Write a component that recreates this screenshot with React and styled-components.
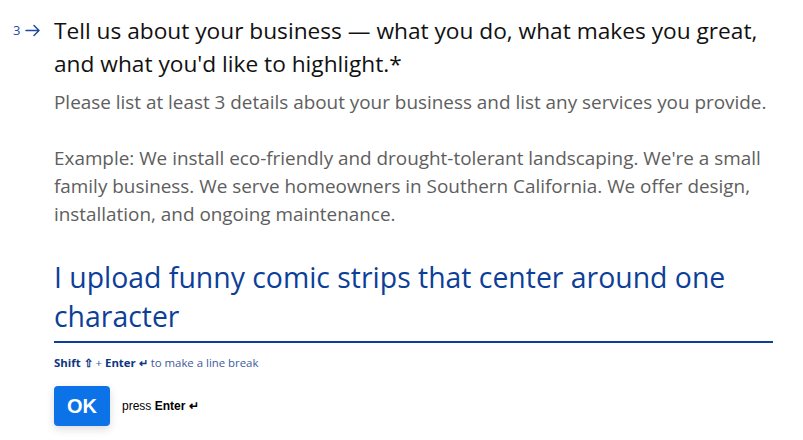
import React from "react";
import styled, { createGlobalStyle } from "styled-components";

const GlobalStyle = createGlobalStyle`
  html, body {
    margin: 0;
    padding: 0;
    background: #ffffff;
  }
  body {
    font-family: "Open Sans", "Noto Sans", sans-serif;
  }
`;

const Page = styled.div`
  width: 803px;
  height: 440px;
  box-sizing: border-box;
  padding: 14px 30px 0 54px;
  overflow: hidden;
`;

const Question = styled.div`
  position: relative;
`;

const Counter = styled.div`
  position: absolute;
  left: -41px;
  top: 8px;
  display: flex;
  align-items: center;
  gap: 5px;
  color: #1d4aa0;
  font-size: 13px;
  line-height: 16px;
`;

const Title = styled.h1`
  margin: 0;
  font-size: 22.7px;
  line-height: 33px;
  font-weight: 400;
  color: #111111;
  white-space: nowrap;
`;

const Description = styled.div`
  margin-top: 8px;
  font-size: 18.9px;
  line-height: 28px;
  color: #5e5e5e;
  white-space: nowrap;
  p {
    margin: 0;
  }
  p + p {
    margin-top: 28px;
  }
`;

const Answer = styled.div`
  margin-top: 30px;
  width: 719px;
  padding-bottom: 5px;
  border-bottom: 2px solid #0d3f98;
  font-size: 28.4px;
  line-height: 39px;
  color: #0d3f98;
  white-space: nowrap;
`;

const Hint = styled.div`
  margin-top: 13px;
  font-size: 11.4px;
  line-height: 14px;
  color: #3d5a9e;
  b {
    font-weight: 700;
    color: #0d3580;
  }
`;

const Actions = styled.div`
  margin-top: 16px;
  display: flex;
  align-items: center;
  gap: 12px;
`;

const OkButton = styled.button`
  width: 56px;
  height: 40px;
  border: none;
  border-radius: 4px;
  background: #0b72e7;
  color: #ffffff;
  font-family: "Liberation Sans", Arial, sans-serif;
  font-size: 20px;
  font-weight: 700;
  box-shadow: 0 3px 8px rgba(0, 0, 0, 0.15);
  cursor: pointer;
`;

const PressEnter = styled.span`
  font-family: "Liberation Sans", Arial, sans-serif;
  font-size: 12px;
  color: #000000;
  b {
    font-weight: 700;
  }
`;

function ArrowRight() {
  return (
    <svg width="16" height="13" viewBox="0 0 16 13" fill="none">
      <path
        d="M1 6.5h13M9 1.5l5 5-5 5"
        stroke="currentColor"
        strokeWidth="1.5"
        strokeLinecap="round"
        strokeLinejoin="round"
      />
    </svg>
  );
}

export default function App() {
  return (
    <>
      <GlobalStyle />
      <Page>
        <Question>
          <Counter>
            <span>3</span>
            <ArrowRight />
          </Counter>
          <Title>
            Tell us about your business — what you do, what makes you great,
            <br />
            and what you'd like to highlight.*
          </Title>
          <Description>
            <p>
              Please list at least 3 details about your business and list any
              services you provide.
            </p>
            <p>
              Example: We install eco-friendly and drought-tolerant landscaping.
              We're a small
              <br />
              family business. We serve homeowners in Southern California. We
              offer design,
              <br />
              installation, and ongoing maintenance.
            </p>
          </Description>
          <Answer>
            I upload funny comic strips that center around one
            <br />
            character
          </Answer>
          <Hint>
            <b>Shift ⇧</b> + <b>Enter ↵</b> to make a line break
          </Hint>
          <Actions>
            <OkButton>OK</OkButton>
            <PressEnter>
              press <b>Enter ↵</b>
            </PressEnter>
          </Actions>
        </Question>
      </Page>
    </>
  );
}
